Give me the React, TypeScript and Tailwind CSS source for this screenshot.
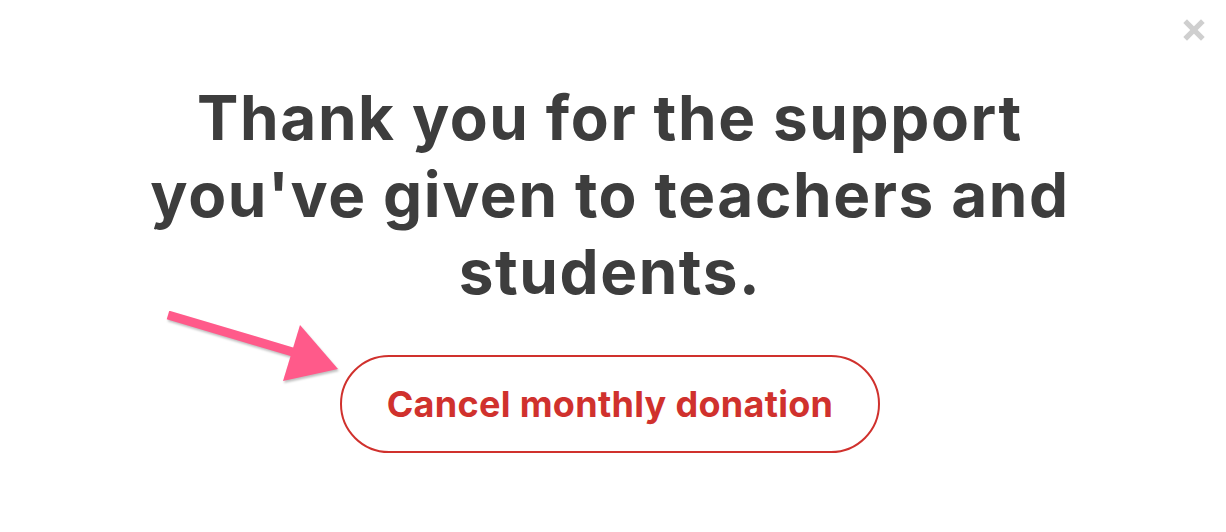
import { X } from "lucide-react";

export default function App() {
  return (
    <div className="relative w-[1226px] h-[532px] bg-white overflow-hidden" style={{ fontFamily: "Inter, 'Open Sans', sans-serif" }}>
      {/* close */}
      <button className="absolute right-[18px] top-[16px] text-[#cfcfcf]">
        <X size={28} strokeWidth={4.5} strokeLinecap="square" />
      </button>

      <div className="flex flex-col items-center pt-[79px] pr-[6px]">
        <h1 className="text-center text-[#3d3d3d] font-bold text-[62px] leading-[77px] tracking-[1.6px]">
          Thank you for the support
          <br />
          you've given to teachers and
          <br />
          students.
        </h1>

        <div className="relative mt-[45px]">
          {/* arrow */}
          <svg className="absolute left-[-176px] top-[-44px] drop-shadow-[1px_2px_1px_rgba(0,0,0,0.25)]" width="180" height="80" viewBox="0 0 180 80">
            <line x1="4" y1="4" x2="132" y2="42" stroke="#ff5a8a" strokeWidth="9" />
            <polygon points="136,14 174,58 119,70" fill="#ff5a8a" />
          </svg>
          <button className="w-[540px] h-[98px] rounded-full border-2 border-[#d0312d] text-[#d0312d] font-bold text-[36px] tracking-[0.3px]">
            Cancel monthly donation
          </button>
        </div>
      </div>
    </div>
  );
}
